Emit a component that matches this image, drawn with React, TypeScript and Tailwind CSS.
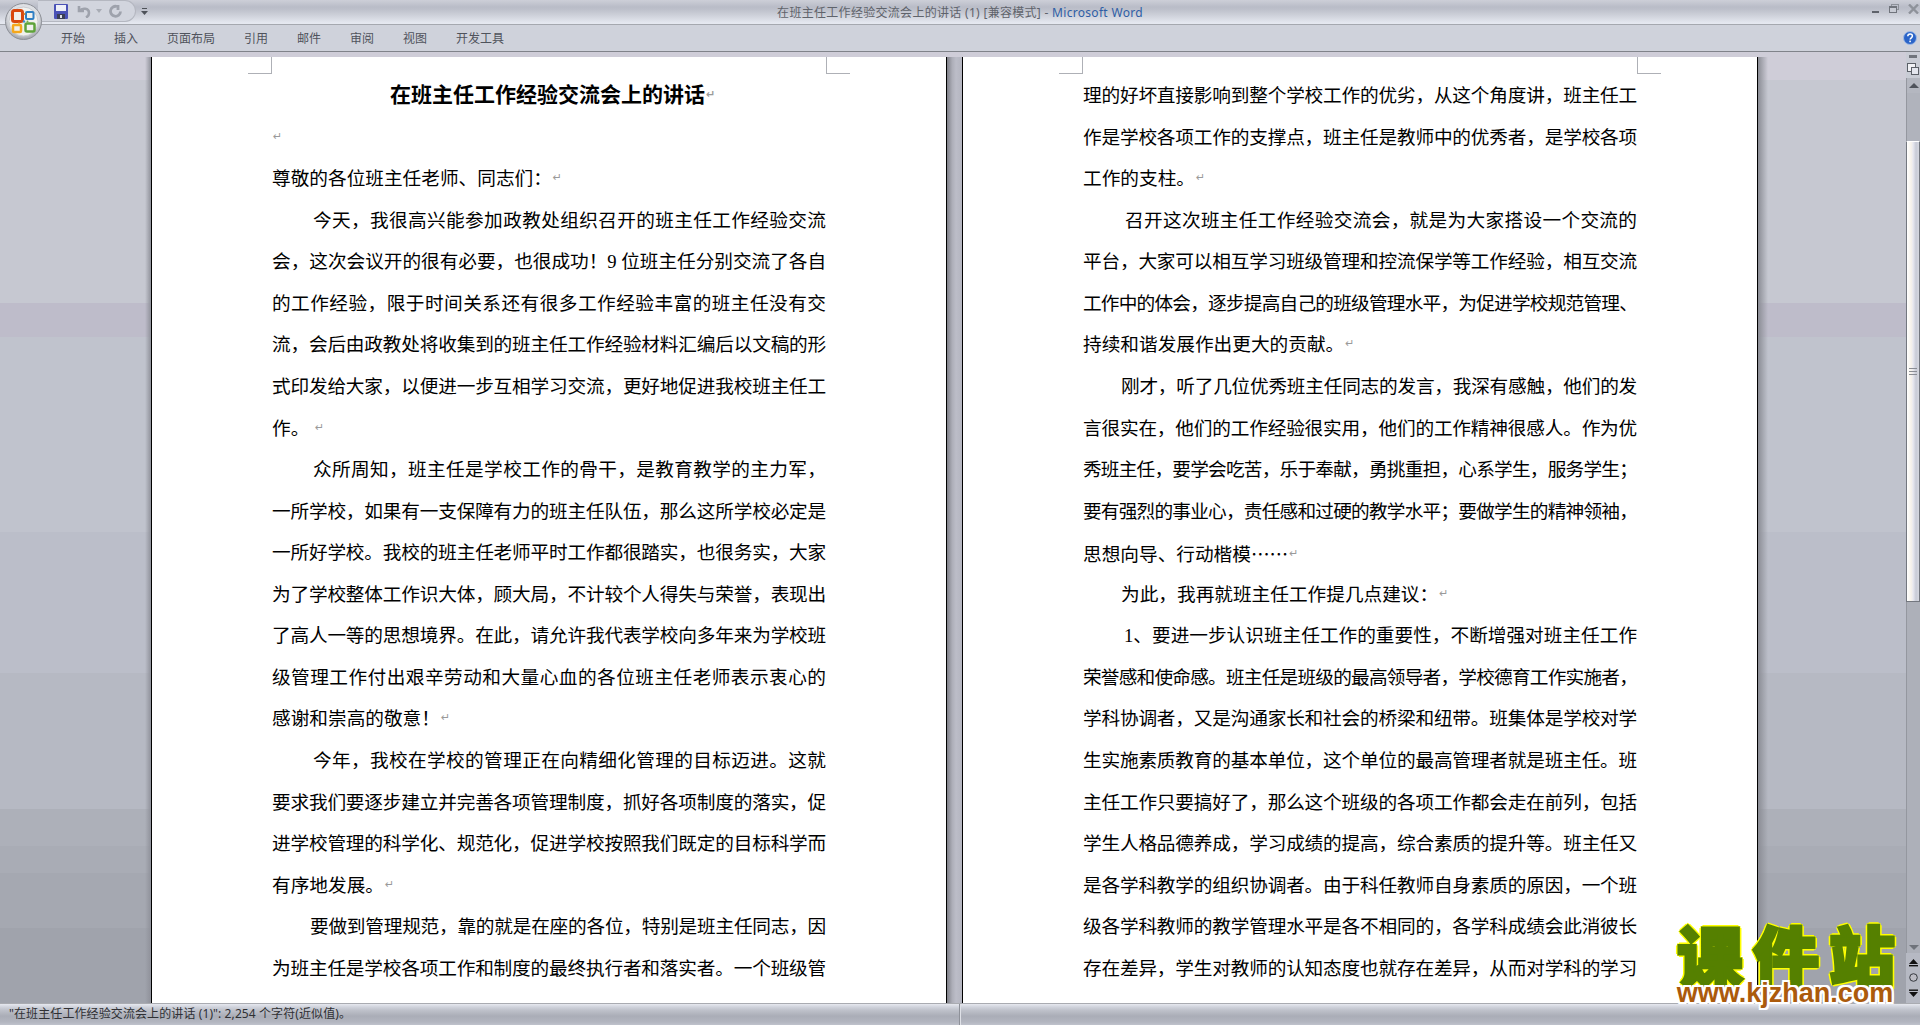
import React from "react";

type L = { t: string; i?: number; end?: boolean };

const left: L[] = [
  { t: "尊敬的各位班主任老师、同志们：", end: true },
  { t: "今天，我很高兴能参加政教处组织召开的班主任工作经验交流", i: 41 },
  { t: "会，这次会议开的很有必要，也很成功！9 位班主任分别交流了各自" },
  { t: "的工作经验，限于时间关系还有很多工作经验丰富的班主任没有交" },
  { t: "流，会后由政教处将收集到的班主任工作经验材料汇编后以文稿的形" },
  { t: "式印发给大家，以便进一步互相学习交流，更好地促进我校班主任工" },
  { t: "作。 ", end: true },
  { t: "众所周知，班主任是学校工作的骨干，是教育教学的主力军，", i: 41 },
  { t: "一所学校，如果有一支保障有力的班主任队伍，那么这所学校必定是" },
  { t: "一所好学校。我校的班主任老师平时工作都很踏实，也很务实，大家" },
  { t: "为了学校整体工作识大体，顾大局，不计较个人得失与荣誉，表现出" },
  { t: "了高人一等的思想境界。在此，请允许我代表学校向多年来为学校班" },
  { t: "级管理工作付出艰辛劳动和大量心血的各位班主任老师表示衷心的" },
  { t: "感谢和崇高的敬意！", end: true },
  { t: "今年，我校在学校的管理正在向精细化管理的目标迈进。这就", i: 41 },
  { t: "要求我们要逐步建立并完善各项管理制度，抓好各项制度的落实，促" },
  { t: "进学校管理的科学化、规范化，促进学校按照我们既定的目标科学而" },
  { t: "有序地发展。", end: true },
  { t: "要做到管理规范，靠的就是在座的各位，特别是班主任同志，因", i: 38 },
  { t: "为班主任是学校各项工作和制度的最终执行者和落实者。一个班级管" },
];

const right: L[] = [
  { t: "理的好坏直接影响到整个学校工作的优劣，从这个角度讲，班主任工" },
  { t: "作是学校各项工作的支撑点，班主任是教师中的优秀者，是学校各项" },
  { t: "工作的支柱。", end: true },
  { t: "召开这次班主任工作经验交流会，就是为大家搭设一个交流的", i: 42 },
  { t: "平台，大家可以相互学习班级管理和控流保学等工作经验，相互交流" },
  { t: "工作中的体会，逐步提高自己的班级管理水平，为促进学校规范管理、" },
  { t: "持续和谐发展作出更大的贡献。", end: true },
  { t: "刚才，听了几位优秀班主任同志的发言，我深有感触，他们的发", i: 38 },
  { t: "言很实在，他们的工作经验很实用，他们的工作精神很感人。作为优" },
  { t: "秀班主任，要学会吃苦，乐于奉献，勇挑重担，心系学生，服务学生；" },
  { t: "要有强烈的事业心，责任感和过硬的教学水平；要做学生的精神领袖，" },
  { t: "思想向导、行动楷模", end: true },
  { t: "为此，我再就班主任工作提几点建议：", i: 38, end: true },
  { t: "1、要进一步认识班主任工作的重要性，不断增强对班主任工作", i: 41 },
  { t: "荣誉感和使命感。班主任是班级的最高领导者，学校德育工作实施者，" },
  { t: "学科协调者，又是沟通家长和社会的桥梁和纽带。班集体是学校对学" },
  { t: "生实施素质教育的基本单位，这个单位的最高管理者就是班主任。班" },
  { t: "主任工作只要搞好了，那么这个班级的各项工作都会走在前列，包括" },
  { t: "学生人格品德养成，学习成绩的提高，综合素质的提升等。班主任又" },
  { t: "是各学科教学的组织协调者。由于科任教师自身素质的原因，一个班" },
  { t: "级各学科教师的教学管理水平是各不相同的，各学科成绩会此消彼长" },
  { t: "存在差异，学生对教师的认知态度也就存在差异，从而对学科的学习" },
];

const FS = 18.67;
function tracking(t: string, avail: number) {
  let w = 0;
  for (const c of t) w += c === " " ? 0.25 : c.charCodeAt(0) < 128 ? 0.5 : 1;
  const need = w * FS;
  return need > avail - 1 ? (avail - 1 - need) / [...t].length : 0;
}

function Mark() {
  return (
    <span className="ml-[1px] inline-block -translate-y-[4px] text-[11px] text-[#9a9a9a] [font-family:'DejaVu_Sans',sans-serif]">
      ↵
    </span>
  );
}

function Line({ t, i = 0, end = false }: L) {
  const ls = end ? 0 : tracking(t, 554 - i);
  return (
    <div
      className={
        end
          ? "h-[41.57px] whitespace-pre text-left"
          : "h-[41.57px] whitespace-nowrap text-justify [text-align-last:justify]"
      }
      style={{ paddingLeft: i, letterSpacing: ls }}
    >
      {t}
      {t.endsWith("楷模") && <span className="[font-family:'Noto_Sans_CJK_SC',sans-serif]">……</span>}
      {end && <Mark />}
    </div>
  );
}

function Crop({ side }: { side: "l" | "r" }) {
  return (
    <div
      className={
        side === "l"
          ? "absolute top-0 left-[96px] h-[17px] w-[24px] border-r border-b border-[#aeb0b6]"
          : "absolute top-0 left-[674px] h-[17px] w-[24px] border-l border-b border-[#aeb0b6]"
      }
    />
  );
}

function Page({ children }: { children: React.ReactNode }) {
  return (
    <div className="relative mt-[5px] h-[946px] w-[796px] shrink-0 overflow-hidden border-x border-black bg-white px-[120px] pt-[18px] text-[18.67px] leading-[41.57px] text-black [font-family:'Liberation_Serif','Noto_Sans_CJK_SC',serif] [text-spacing-trim:space-all]">
      <Crop side="l" />
      <Crop side="r" />
      {children}
    </div>
  );
}

function OfficeButton() {
  return (
    <svg className="absolute left-[5px] top-[3px]" width="37" height="37" viewBox="0 0 37 37">
      <defs>
        <radialGradient id="ob" cx="50%" cy="40%" r="60%">
          <stop offset="0%" stopColor="#f8f8f8" />
          <stop offset="70%" stopColor="#d9dbe0" />
          <stop offset="100%" stopColor="#9ea1a8" />
        </radialGradient>
      </defs>
      <circle cx="18.5" cy="18.5" r="18" fill="url(#ob)" stroke="#8d9097" strokeWidth="1" />
      <circle cx="18.5" cy="18.5" r="14.5" fill="#f1f1ee" stroke="#c9cbd0" />
      <rect x="7.5" y="7.5" width="10" height="11" rx="2" fill="none" stroke="#d9480f" strokeWidth="3" />
      <rect x="21" y="9" width="7.5" height="7" rx="1" fill="none" stroke="#2f7fc4" strokeWidth="2" />
      <rect x="8" y="22" width="8" height="7" rx="1" fill="none" stroke="#f5a81c" strokeWidth="2.5" />
      <rect x="20.5" y="20.5" width="9" height="8" rx="1.5" fill="none" stroke="#5fa33a" strokeWidth="2.5" />
      <circle cx="19.5" cy="11" r="1" fill="#e08a2e" />
      <circle cx="19" cy="18.5" r="1.2" fill="#3c8fd0" />
      <circle cx="14" cy="20.5" r="1" fill="#f2b63c" />
      <circle cx="22.5" cy="18.5" r="1" fill="#6fb248" />
    </svg>
  );
}

function Quick() {
  return (
    <div className="ml-[38px] flex h-[22px] items-center">
      <div className="flex h-[22px] w-[98px] items-center rounded-r-[11px] border border-l-0 border-[#b4b7c0] bg-[#d2d5de] pl-[16px]">
        <svg width="14" height="15" viewBox="0 0 14 15">
          <rect x="0" y="0" width="14" height="15" rx="1" fill="#4a52b6" />
          <rect x="2" y="1" width="10" height="6" fill="#eef0f8" />
          <rect x="3" y="10" width="8" height="5" fill="#3b3f55" />
          <rect x="6" y="11" width="2" height="3" fill="#dfe2ea" />
        </svg>
        <svg className="ml-[9px]" width="14" height="14" viewBox="0 0 14 14" fill="none" stroke="#9ea2ac" strokeWidth="2.6">
          <path d="M2 2v5h5" />
          <path d="M2.5 7C5 3.5 12 4 12 9c0 2-1 3.5-3 4.5" />
        </svg>
        <svg className="ml-[5px]" width="6" height="4" viewBox="0 0 6 4"><path d="M0 0h6L3 4z" fill="#a8acb5" /></svg>
        <svg className="ml-[7px]" width="13" height="14" viewBox="0 0 13 14" fill="none" stroke="#9ea2ac" strokeWidth="2.8">
          <path d="M8 2.5a5 5 0 1 0 3.5 5" />
          <path d="M9 1v5" />
        </svg>
      </div>
      <svg className="ml-[5px]" width="7" height="7" viewBox="0 0 7 7">
        <rect x="1" y="0" width="5" height="1" fill="#4e5259" />
        <path d="M0 3h7L3.5 7z" fill="#4e5259" />
      </svg>
    </div>
  );
}

function WindowButtons() {
  return (
    <div className="flex h-full items-start justify-end">
      <div className="mt-[11px] mr-[10px] h-[2px] w-[7px] bg-[#5f636b]" />
      <svg className="mt-[4px] mr-[9px]" width="10" height="9" viewBox="0 0 10 9">
        <rect x="2.5" y="0.5" width="7" height="5" fill="none" stroke="#8d9199" />
        <rect x="0.5" y="2.5" width="7" height="6" fill="#c8cbd4" stroke="#70747c" />
        <rect x="0.5" y="2.5" width="7" height="1.5" fill="#70747c" />
      </svg>
      <svg className="mt-[4px] mr-[1px]" width="11" height="10" viewBox="0 0 11 10" fill="none" stroke="#8e929a" strokeWidth="2.4">
        <path d="M1 0.5l9 9M10 0.5l-9 9" />
      </svg>
    </div>
  );
}

function Help() {
  return (
    <svg width="14" height="14" viewBox="0 0 14 14" className="mr-[3px]">
      <circle cx="7" cy="7" r="6.5" fill="#2a64c8" stroke="#9fb9e4" />
      <path d="M4.8 5.2c0-3 4.6-3 4.6-.2 0 1.8-2.3 1.8-2.3 3.6" fill="none" stroke="#fff" strokeWidth="1.5" />
      <rect x="6.3" y="9.6" width="1.6" height="1.6" fill="#fff" />
    </svg>
  );
}

const tabs = ["开始", "插入", "页面布局", "引用", "邮件", "审阅", "视图", "开发工具"];

function Ribbon() {
  return (
    <div className="relative z-10 shrink-0">
      <div className="grid h-[24px] grid-cols-[1fr_auto_1fr] bg-[linear-gradient(180deg,#cdcfd8_0,#b9bcc7_7px,#bcbfca_9px,#cdd0d9_15px,#e5e8f0_23px)] text-[12px] leading-[25px] [font-family:'Noto_Sans','Noto_Sans_CJK_SC',sans-serif]">
        <Quick />
        <div className="whitespace-pre tracking-[0.3px] text-[#5f636b]">
          在班主任工作经验交流会上的讲话 (1) [兼容模式] - <span className="text-[#2f5ea6]">Microsoft Word</span>
        </div>
        <WindowButtons />
      </div>
      <div className="flex h-[28px] items-center border-t border-b border-t-[#a5a8af] border-b-[#80838a] bg-[#cfd2db] pl-[61px] text-[12px] text-[#4f535c] [font-family:'Noto_Sans_CJK_SC',sans-serif]">
        <div className="flex flex-1 gap-[29px]">
          {tabs.map((x) => (
            <span key={x}>{x}</span>
          ))}
        </div>
        <Help />
      </div>
      <OfficeButton />
    </div>
  );
}

function Scrollbar() {
  return (
    <div className="flex h-full w-[14px] shrink-0 flex-col items-center bg-[#c9ccd5]">
      <div className="mt-[3px] h-[3px] w-[8px] bg-[#70747c]" />
      <div className="mt-[2px] flex h-[18px] w-[14px] items-center justify-center">
        <svg width="12" height="12" viewBox="0 0 12 12">
          <rect x="0.5" y="0.5" width="8" height="8" fill="#f1f1f5" stroke="#5c6068" />
          <rect x="4.5" y="4.5" width="7" height="7" fill="#e4e6ee" stroke="#5c6068" />
        </svg>
      </div>
      <div className="flex h-[15px] w-[14px] items-center justify-center border-l border-[#94979f] bg-[#b4b7c0]">
        <svg width="10" height="5" viewBox="0 0 10 5"><path d="M0 5h10L5 0z" fill="#4f535b" /></svg>
      </div>
      <div className="h-[48px] w-[14px] border-l border-[#94979f] bg-[#b0b3bc]" />
      <div className="flex h-[461px] w-[14px] items-center justify-center border-x border-y border-x-[#73777f] border-t-white border-b-[#73777f] bg-[linear-gradient(90deg,#ffffff,#f6f2ea_35%,#e9e9f0_50%,#c8cbd6_75%,#d6d8e0)]">
        <div className="h-[7px] w-[8px] border-y border-[#8a8d94] bg-[linear-gradient(180deg,transparent_2px,#8a8d94_2px,#8a8d94_3px,transparent_3px)]" />
      </div>
      <div className="flex w-[14px] flex-1 items-end justify-center border-l border-[#94979f] bg-[#adb0b9] pb-[3px]">
        <svg width="10" height="5" viewBox="0 0 10 5"><path d="M0 0h10L5 5z" fill="#6f737b" /></svg>
      </div>
      <div className="flex h-[50px] w-[14px] flex-col items-center justify-around bg-[#b6b9c3] py-[2px]">
        <svg width="9" height="9" viewBox="0 0 9 9" fill="#111">
          <rect x="0" y="7" width="9" height="1.4" />
          <path d="M4.5 1L9 6H0z" />
        </svg>
        <svg width="9" height="9" viewBox="0 0 9 9">
          <circle cx="4.5" cy="4.5" r="3.8" fill="#bcbcc4" stroke="#35383e" />
        </svg>
        <svg width="9" height="9" viewBox="0 0 9 9" fill="#111">
          <rect x="0" y="0.5" width="9" height="1.4" />
          <path d="M4.5 8L9 3H0z" />
        </svg>
      </div>
    </div>
  );
}

function Document() {
  return (
    <div className="flex min-h-0 flex-1 bg-[linear-gradient(180deg,#cfcdd8_0,#cfcdd8_28px,#c6c8d1_28px,#c6c8d1_251px,#bebcca_251px,#bebcca_285px,#c0c3cd_285px,#c0c3cd_480px,#bbbec9_480px,#bbbec9_621px,#b6b9c3_621px,#b6b9c3_757px,#adb0b9_757px,#adb0b9_794px,#a9acb5_794px,#a9acb5_821px,#a5a8b1_821px,#a5a8b1_876px,#a0a3ac_876px)]">
      <div className="ml-[145px] mt-[5px] h-[946px] w-[6px] shrink-0 bg-[linear-gradient(90deg,transparent,#8f919a)]" />
      <Page>
        <div className="h-[41.57px] pl-[7px] text-center text-[21px] font-bold">
          在班主任工作经验交流会上的讲话
          <Mark />
        </div>
        <div className="h-[41.57px]">
          <Mark />
        </div>
        {left.map((l, n) => (
          <Line key={n} {...l} />
        ))}
      </Page>
      <div className="mt-[5px] h-[946px] w-[15px] shrink-0 bg-[linear-gradient(90deg,#7f8088,#adaeb8_35%,#bcbdc8_60%,#b4b5c0)]" />
      <Page>
        {right.map((l, n) => (
          <Line key={n} {...l} />
        ))}
      </Page>
      <div className="mt-[5px] h-[946px] w-[10px] shrink-0 bg-[linear-gradient(90deg,#8b8d95,transparent)]" />
      <div className="flex-1" />
      <Scrollbar />
    </div>
  );
}

function StatusBar() {
  return (
    <div className="flex h-[22px] shrink-0 border-t border-[#a9abb1] bg-[linear-gradient(180deg,#e6e8ef_0,#d0d3dc_3px,#bfc2cb_6px,#aaadb7_12px,#b3b6c0_18px,#bfc2cc_21px)] text-[12px] leading-[20px] tracking-[0.1px] text-[#2f3034] [font-family:'Noto_Sans','Noto_Sans_CJK_SC',sans-serif]">
      <div className="w-[960px] whitespace-pre border-r border-[#8e9199] pl-[9px]">
        "在班主任工作经验交流会上的讲话 (1)": 2,254 个字符(近似值)。
      </div>
      <div className="flex-1 border-l border-[#dfe1e7]" />
    </div>
  );
}

function Watermark() {
  return (
    <div className="absolute left-[1667px] top-[925px] z-20 w-[236px] text-center">
      <div className="whitespace-nowrap pl-[10px] text-[66px] font-black leading-[56px] tracking-[10px] text-[#558000] [-webkit-text-stroke:3px_#558000] [font-family:'Noto_Sans_CJK_SC',sans-serif] [text-shadow:3px_0_0_#ffff00,-3px_0_0_#ffff00,0_3px_0_#ffff00,0_-3px_0_#ffff00,2px_2px_0_#ffff00,-2px_-2px_0_#ffff00,2px_-2px_0_#ffff00,-2px_2px_0_#ffff00]">
        课件站
      </div>
      <div className="text-[27px] font-bold leading-[24px] text-[#ab5a0c] [font-family:'Liberation_Sans',sans-serif] [text-shadow:2px_0_0_#fff,-2px_0_0_#fff,0_2px_0_#fff,0_-2px_0_#fff,2px_2px_0_#fff,-2px_-2px_0_#fff,2px_-2px_0_#fff,-2px_2px_0_#fff]">
        www.kjzhan.com
      </div>
    </div>
  );
}

export default function App() {
  return (
    <div lang="zh-CN" className="relative flex h-[1025px] w-full flex-col overflow-hidden bg-[#c6c8d1]">
      <Ribbon />
      <Document />
      <StatusBar />
      <Watermark />
    </div>
  );
}
